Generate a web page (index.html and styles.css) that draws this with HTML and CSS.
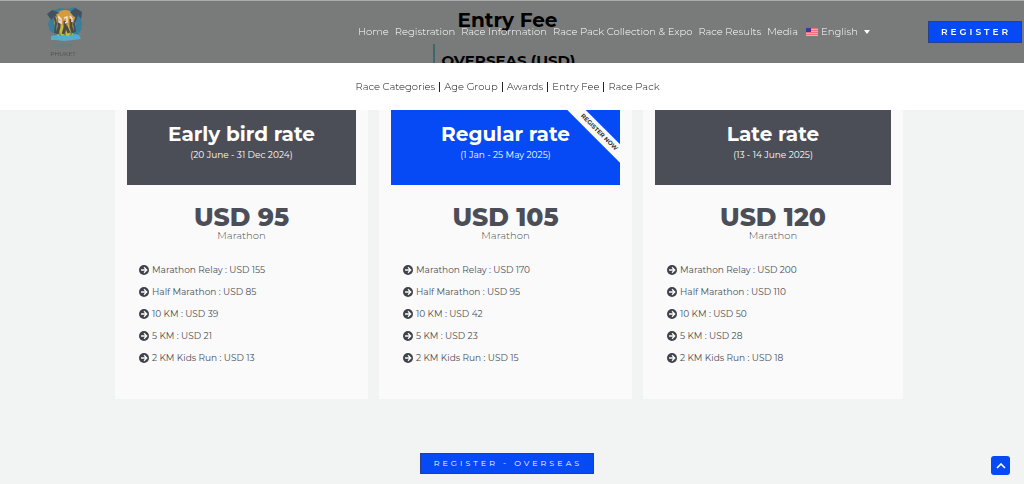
FILE: index.html
```html
<!DOCTYPE html>
<html lang="en">
<head>
    <meta charset="UTF-8">
    <meta name="viewport" content="width=device-width, initial-scale=1.0">
    <title>Entry Fee</title>
    <link rel="stylesheet" href="styles.css">
</head>
<body>
    <!-- Icon shared by the price lists -->
    <svg width="0" height="0" class="sprite" aria-hidden="true">
        <symbol id="arrow" viewBox="0 0 20 20">
            <circle cx="10" cy="10" r="10" fill="#3f4248"/>
            <path d="M4 10h11M10 4.500l5.500 5.500-5.500 5.500" fill="none" stroke="#fafafa" stroke-width="2.600"/>
        </symbol>
    </svg>

    <div class="top">
        <header class="header">
            <a href="#" class="logo" aria-label="Home">
                <svg width="38" height="52" viewBox="0 0 38 52">
                    <path d="M3 9l4-5 4-1 3-1 7 1 7-2 6 3 2 4-1 5 1 5-1 6-3 4 1 4H8l1-4-5-3-2-7 2-5z" fill="#397f9c"/>
                    <circle cx="19" cy="15" r="11" fill="#d99a3e"/>
                    <path d="M10 19h18l-1 11H11z" fill="#c1bd45"/>
                    <path d="M12 25l3 6M19 24v8M26 24l-2 7" stroke="#6d9a4c" stroke-width="2"/>
                    <path d="M5 30l5-1 3 1 5-1 5 1 6-2 4 1 2 4-8 1-9 1-8-1H5z" fill="#4eaed6"/>
                    <path d="M1 8l5-4 8 3-4 1 1 3-3-2-2 5-3-3zM24 6l5-4 7 4-1 7-3-4-4 2z" fill="#405260"/>
                    <path d="M8 9l2 8-1 10M31 9l-3 9 1 8" fill="none" stroke="#405260" stroke-width="2"/>
                    <path d="M13 12v9l-2 7M19 15v7l-2 6M20 20l3 7M25 13v8l2 6" fill="none" stroke="#514b48" stroke-width="3"/>
                    <path d="M13 11l2 2v4l-2-1zM18 12l3-1v5l-2 1M24 10l2 3v3" fill="none" stroke="#ece6da" stroke-width="1.500"/>
                    <text x="17" y="41" class="logo-top">Laguna</text>
                    <text x="17" y="50" class="logo-name">PHUKET</text>
                </svg>
            </a>
            <nav class="menu">
                <a href="#">Home</a>
                <a href="#">Registration</a>
                <a href="#">Race Information</a>
                <a href="#">Race Pack Collection &amp; Expo</a>
                <a href="#">Race Results</a>
                <a href="#">Media</a>
                <a href="#" class="lang">
                    <svg width="12" height="8" viewBox="0 0 12 8">
                        <path fill="#f4a9ae" d="M0 0h12v8H0z"/>
                        <path stroke="#ee6f78" d="M0 .5h12M0 2.500h12M0 4.500h12M0 6.500h12"/>
                        <path fill="#3c3b8e" d="M0 0h5v4H0z"/>
                    </svg>
                    English
                    <svg class="caret" width="6" height="4" viewBox="0 0 6 4"><path d="M0 0h6L3 4z" fill="#fff"/></svg>
                </a>
            </nav>
            <button type="button" class="btn btn-register">REGISTER</button>
        </header>
        <nav class="submenu">
            <a href="#">Race Categories</a>
            <a href="#">Age Group</a>
            <a href="#">Awards</a>
            <a href="#">Entry Fee</a>
            <a href="#">Race Pack</a>
        </nav>
    </div>

    <main>
        <h1>Entry Fee</h1>
        <h2>OVERSEAS (USD)</h2>

        <div class="prices">
            <section class="card">
                <div class="card-head">
                    <h3>Early bird rate</h3>
                    <p>(20 June - 31 Dec 2024)</p>
                </div>
                <p class="price">USD 95</p>
                <p class="distance">Marathon</p>
                <ul>
                    <li><svg><use href="#arrow"/></svg>Marathon Relay : USD 155</li>
                    <li><svg><use href="#arrow"/></svg>Half Marathon : USD 85</li>
                    <li><svg><use href="#arrow"/></svg>10 KM : USD 39</li>
                    <li><svg><use href="#arrow"/></svg>5 KM : USD 21</li>
                    <li><svg><use href="#arrow"/></svg>2 KM Kids Run : USD 13</li>
                </ul>
            </section>

            <section class="card">
                <div class="card-head current">
                    <h3>Regular rate</h3>
                    <p>(1 Jan - 25 May 2025)</p>
                    <span class="ribbon">REGISTER NOW</span>
                </div>
                <p class="price">USD 105</p>
                <p class="distance">Marathon</p>
                <ul>
                    <li><svg><use href="#arrow"/></svg>Marathon Relay : USD 170</li>
                    <li><svg><use href="#arrow"/></svg>Half Marathon : USD 95</li>
                    <li><svg><use href="#arrow"/></svg>10 KM : USD 42</li>
                    <li><svg><use href="#arrow"/></svg>5 KM : USD 23</li>
                    <li><svg><use href="#arrow"/></svg>2 KM Kids Run : USD 15</li>
                </ul>
            </section>

            <section class="card">
                <div class="card-head">
                    <h3>Late rate</h3>
                    <p>(13 - 14 June 2025)</p>
                </div>
                <p class="price">USD 120</p>
                <p class="distance">Marathon</p>
                <ul>
                    <li><svg><use href="#arrow"/></svg>Marathon Relay : USD 200</li>
                    <li><svg><use href="#arrow"/></svg>Half Marathon : USD 110</li>
                    <li><svg><use href="#arrow"/></svg>10 KM : USD 50</li>
                    <li><svg><use href="#arrow"/></svg>5 KM : USD 28</li>
                    <li><svg><use href="#arrow"/></svg>2 KM Kids Run : USD 18</li>
                </ul>
            </section>
        </div>

        <button type="button" class="btn btn-overseas">REGISTER - OVERSEAS</button>
    </main>

    <button type="button" class="to-top" aria-label="Back to top">
        <svg width="10" height="6" viewBox="0 0 10 6"><path d="M1 5l4-4 4 4" fill="none" stroke="#fff" stroke-width="1.600"/></svg>
    </button>
</body>
</html>
```
FILE: styles.css
```css
/* General Reset */
* {
    margin: 0;
    padding: 0;
    box-sizing: border-box;
}

body {
    font-family: Montserrat, Inter, sans-serif;
    font-size: 10px;
    background-color: #f2f4f4;
    color: #4b4e57;
}

a {
    color: inherit;
    text-decoration: none;
}

.sprite {
    position: absolute;
}

/* Fixed header and sub menu */
.top {
    position: fixed;
    top: 0;
    left: 0;
    right: 0;
    z-index: 10;
}

.header {
    display: flex;
    align-items: center;
    height: 63px;
    padding: 0 2px 1px 46px;
    background-color: rgba(0, 0, 0, 0.5);
    border-top: 1px solid #a9adab;
}

.logo svg {
    display: block;
}

.logo-top {
    font-size: 5px;
    text-anchor: middle;
    fill: #4d8583;
}

.logo-name {
    font-size: 6px;
    text-anchor: middle;
    fill: #46484c;
}

.menu {
    display: flex;
    gap: 6px;
    margin-left: auto;
    color: #fff;
    font-weight: 300;
    white-space: nowrap;
}

.lang {
    display: flex;
    align-items: center;
    gap: 3px;
    margin-left: 2px;
}

.caret {
    margin-left: 3px;
}

.submenu {
    display: flex;
    justify-content: center;
    align-items: center;
    height: 47px;
    padding-right: 9px;
    background-color: #fff;
    color: #111;
    font-weight: 300;
}

.submenu a {
    padding: 0 4px;
    line-height: 10px;
}

.submenu a + a {
    border-left: 1px solid #222;
}

/* Buttons */
.btn {
    font-family: inherit;
    color: #fff;
    background-color: #064af5;
    border: 1px solid #24408e;
    cursor: pointer;
}

.btn-register {
    margin-left: 58px;
    padding: 0 10px 0 12px;
    font-size: 9px;
    font-weight: 600;
    letter-spacing: 3px;
    line-height: 20px;
}

.btn-overseas {
    margin: 54px 10px 0 0;
    padding: 0 11px 0 13px;
    font-size: 8px;
    font-weight: 400;
    letter-spacing: 3px;
    line-height: 19px;
}

/* Content */
main {
    padding: 8px 0 10px;
    text-align: center;
}

h1 {
    padding-right: 9px;
    font-size: 20px;
    line-height: 24px;
    color: #000;
}

h2 {
    display: inline-block;
    margin: 12px 16px 16px 0;
    padding-left: 7px;
    border-left: 2px solid #7fd0dc;
    font-size: 15px;
    line-height: 34px;
    color: #000;
}

.prices {
    display: grid;
    grid-template-columns: 253fr 253fr 260fr;
    gap: 11px;
    padding: 0 121px 0 115px;
}

/* Price card */
.card {
    padding: 12px 12px 30px;
    background-color: #fafafa;
}

.card-head {
    position: relative;
    overflow: hidden;
    padding: 16px 0 22px;
    background-color: #4b4e57;
    color: #fff;
}

.card-head.current {
    background-color: #064af5;
}

.card-head h3 {
    margin-bottom: 1px;
    font-size: 20px;
    line-height: 24px;
}

.card-head p {
    font-size: 9px;
    line-height: 16px;
}

.ribbon {
    position: absolute;
    top: 20px;
    right: -39px;
    width: 120px;
    background-color: #fafafa;
    color: #333;
    font-size: 6px;
    font-weight: 700;
    line-height: 13px;
    transform: rotate(45deg);
}

.price {
    margin-top: 19px;
    font-size: 25px;
    font-weight: 800;
    line-height: 26px;
}

.distance {
    font-weight: 300;
    line-height: 12px;
}

.card ul {
    margin-top: 17px;
    padding-left: 12px;
    font-size: 9px;
    list-style: none;
}

.card li {
    display: flex;
    align-items: center;
    gap: 3px;
    line-height: 22px;
}

.card li svg {
    width: 10px;
    height: 10px;
}

/* Back to top */
.to-top {
    position: fixed;
    right: 14px;
    bottom: 9px;
    display: flex;
    justify-content: center;
    align-items: center;
    width: 19px;
    height: 19px;
    background-color: #064af5;
    border: none;
    border-radius: 3px;
    cursor: pointer;
}

/* Mobile Responsiveness */
@media (max-width: 768px) {
    .prices {
        grid-template-columns: 1fr;
        padding: 0 20px;
    }

    .menu {
        display: none;
    }

    .btn-register {
        margin-left: auto;
    }
}
```
